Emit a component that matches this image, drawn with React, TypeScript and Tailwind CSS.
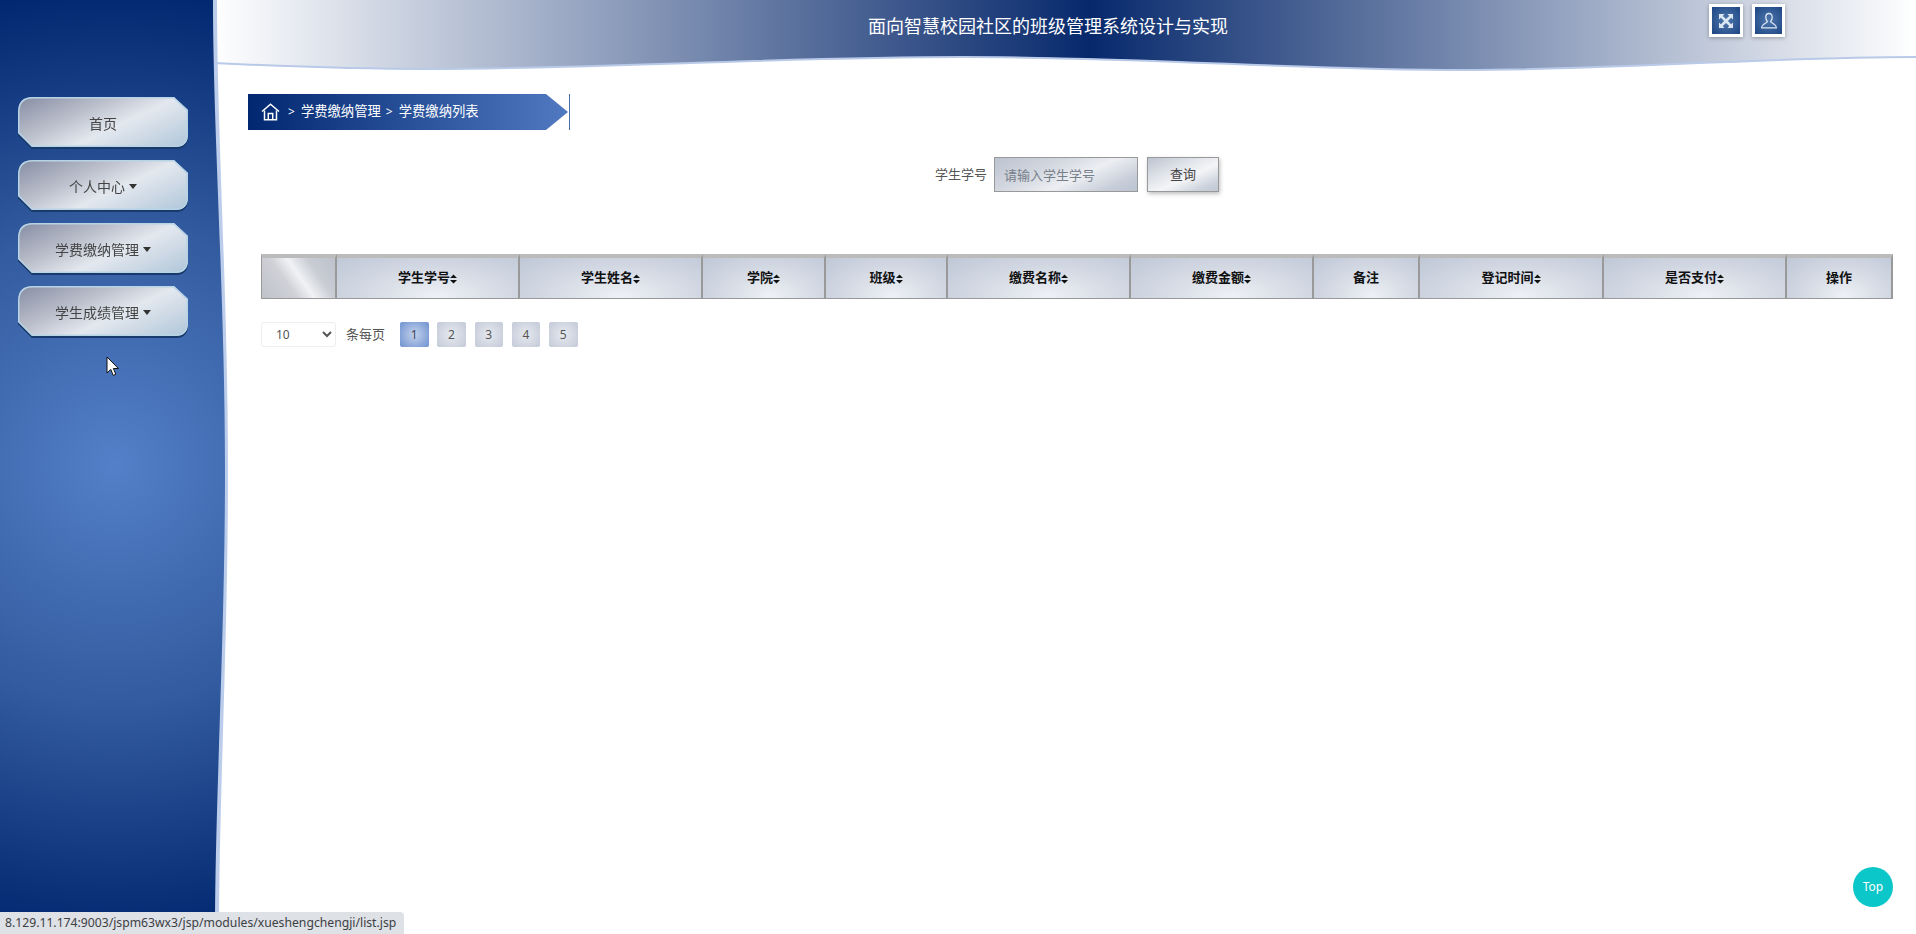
const menus = [
  { title: "首页", caret: false },
  { title: "个人中心", caret: true },
  { title: "学费缴纳管理", caret: true },
  { title: "学生成绩管理", caret: true },
];

const columns = [
  { title: "", width: 76, sort: false },
  { title: "学生学号", width: 183, sort: true },
  { title: "学生姓名", width: 183, sort: true },
  { title: "学院", width: 123, sort: true },
  { title: "班级", width: 122, sort: true },
  { title: "缴费名称", width: 183, sort: true },
  { title: "缴费金额", width: 183, sort: true },
  { title: "备注", width: 106, sort: false },
  { title: "登记时间", width: 184, sort: true },
  { title: "是否支付", width: 183, sort: true },
  { title: "操作", width: 106, sort: false },
];

const pages = [1, 2, 3, 4, 5];

const SortIcon = () => (
  <svg width="7" height="10" viewBox="0 0 7 10" className="inline-block">
    <path d="M3.5 0.5L7 4H0Z M0 6H7L3.5 9.5Z" fill="#111" />
  </svg>
);

const Caret = () => (
  <span className="inline-block w-0 h-0 ml-[4px] align-[3px] border-t-[5px] border-x-[4.5px] border-x-transparent border-t-[#333]" />
);

const SideBackground = () => (
  <svg width="228" height="934" className="absolute left-0 top-0">
    <defs>
      <radialGradient id="sideFill" gradientUnits="userSpaceOnUse" cx="115" cy="465" r="480">
        <stop offset="0" stopColor="#5380c8" />
        <stop offset="0.5" stopColor="#335b9f" />
        <stop offset="1" stopColor="#00276f" />
      </radialGradient>
    </defs>
    <path d="M0 0H217C217 130 228 300 228 470C228 640 219 800 219 934H0Z" fill="#bccdeb" />
    <path d="M0 0H213C213 130 225 300 225 470C225 640 215 800 215 934H0Z" fill="url(#sideFill)" />
  </svg>
);

const HeaderWave = () => (
  <svg width="1703" height="76" className="absolute left-[-15px] top-0">
    <defs>
      <linearGradient id="headFill" x1="0" y1="0" x2="1" y2="0">
        <stop offset="0" stopColor="#ffffff" />
        <stop offset="0.515" stopColor="#07296c" />
        <stop offset="1" stopColor="#ffffff" />
      </linearGradient>
    </defs>
    <path
      d="M0 63C85 67 145 69 215 69C385 69 565 57 750 57C935 57 1085 70 1251 70C1405 70 1545 57 1703 57V0H0Z"
      fill="url(#headFill)"
    />
    <path
      d="M0 63C85 67 145 69 215 69C385 69 565 57 750 57C935 57 1085 70 1251 70C1405 70 1545 57 1703 57"
      fill="none"
      stroke="#b9c9e8"
      strokeWidth="2"
    />
  </svg>
);

const SideButton = ({ title, caret }: { title: string; caret: boolean }) => (
  <div className="[filter:drop-shadow(0_2px_0_#1a3a6c)]">
    <button className="relative block w-[170px] h-[50px] pt-[2px] text-[14px] text-[#444] bg-[linear-gradient(155deg,#868da3_0%,#bcc0cc_35%,#e3e8ef_58%,#c9d6e3_80%,#aec6da_100%)] [clip-path:path('M15_0H156L170_13V37Q170_50_157_50H14L0_36V15Q0_0_15_0Z')]">
      <svg width="170" height="50" className="absolute left-0 top-0">
        <path
          d="M15 0H156L170 13V37Q170 50 157 50H14L0 36V15Q0 0 15 0Z"
          fill="none"
          stroke="#b7d3e6"
          strokeWidth="3"
        />
      </svg>
      <span className="relative">
        {title}
        {caret && <Caret />}
      </span>
    </button>
  </div>
);

const App = () => {
  return (
    <div className="relative flex h-[934px] w-[1916px] overflow-hidden bg-white font-['Noto_Sans','Noto_Sans_CJK_SC',sans-serif] text-[13px] text-[#333]">
      <aside className="relative z-10 w-[228px] shrink-0">
        <SideBackground />
        <div className="relative flex flex-col gap-[13px] pl-[18px] pt-[97px]">
          {menus.map((menu) => (
            <SideButton key={menu.title} title={menu.title} caret={menu.caret} />
          ))}
        </div>
      </aside>

      <main className="flex-1 min-w-0">
        <header className="relative flex h-[94px] items-start">
          <HeaderWave />
          <h1 className="relative ml-[640px] w-[360px] pt-[12px] text-center text-[18px] leading-[28px] font-normal whitespace-nowrap text-white">
            面向智慧校园社区的班级管理系统设计与实现
          </h1>
          <div className="relative ml-[481px] mt-[4px] flex gap-[9px]">
            <button className="flex h-[33px] w-[34px] items-center justify-center border-[3px] border-white bg-[radial-gradient(circle,#4f78ad,#1d4583)] shadow-[0_1px_4px_rgba(0,0,0,0.3)]">
              <svg width="16" height="16" viewBox="0 0 16 16" fill="#dbe6f2">
                <path d="M1 1H6.5L4.8 2.9L8 6.1L11.2 2.9L9.5 1H15V6.5L13.1 4.8L9.9 8L13.1 11.2L15 9.5V15H9.5L11.2 13.1L8 9.9L4.8 13.1L6.5 15H1V9.5L2.9 11.2L6.1 8L2.9 4.8L1 6.5Z" />
              </svg>
            </button>
            <button className="flex h-[33px] w-[33px] items-center justify-center border-[3px] border-white bg-[radial-gradient(circle,#4f78ad,#1d4583)] shadow-[0_1px_4px_rgba(0,0,0,0.3)]">
              <svg width="18" height="18" viewBox="0 0 18 18" fill="none" stroke="#dbe6f2" strokeWidth="1.3">
                <path d="M9 1.5C6.8 1.5 5.8 3.2 5.8 5.2C5.8 7.2 6.8 8.8 7.4 9.6C7.4 11 2 11.6 1.7 15.8H16.3C16 11.6 10.6 11 10.6 9.6C11.2 8.8 12.2 7.2 12.2 5.2C12.2 3.2 11.2 1.5 9 1.5Z" />
              </svg>
            </button>
          </div>
        </header>

        <div className="pl-[20px]">
          <nav className="flex h-[36px] items-center">
            <div className="flex h-full w-[320px] items-center bg-[linear-gradient(90deg,#00276f,#5079c2)] pl-[13px] text-[13.33px] text-white [clip-path:polygon(0_0,298px_0,320px_50%,298px_100%,0_100%)]">
              <svg width="19" height="18" viewBox="0 0 19 18" fill="none" stroke="#fff" strokeWidth="1.5">
                <path d="M1 8.5L9.5 1.2L18 8.5" />
                <path d="M3.5 7.5V16.8H15.5V7.5" />
                <path d="M7.3 16.8V10.5H11.7V16.8" />
              </svg>
              <span className="ml-[8px] text-[12px]">&gt;</span>
              <span className="ml-[6px]">学费缴纳管理</span>
              <span className="ml-[5px] text-[12px]">&gt;</span>
              <span className="ml-[6px]">学费缴纳列表</span>
            </div>
            <div className="ml-px h-full w-px bg-[#4a6fa8]" />
          </nav>

          <form className="mt-[27px] flex h-[35px] items-center pl-[687px]">
            <label className="w-[59px] text-[#555]">学生学号</label>
            <input
              placeholder="请输入学生学号"
              className="h-[35px] w-[144px] border border-[#999] bg-[linear-gradient(155deg,#bcc3d0_0%,#d4d8e0_35%,#eceef2_58%,#c6ccd8_85%,#bcc4d2_100%)] pl-[9px] text-[13px] outline-none placeholder:text-[#777f8a]"
            />
            <button
              type="button"
              className="ml-[9px] h-[35px] w-[72px] border border-[#999] bg-[linear-gradient(155deg,#bcc3d0_0%,#e0e3e9_35%,#f4f5f7_58%,#ccd2dc_85%,#c0c7d4_100%)] text-[13px] text-[#444] shadow-[1px_2px_4px_rgba(0,0,0,0.25)]"
            >
              查询
            </button>
          </form>

          <table className="ml-[13px] mt-[62px] w-[1632px] table-fixed border-separate border-spacing-0">
            <colgroup>
              {columns.map((col, i) => (
                <col key={i} style={{ width: col.width }} />
              ))}
            </colgroup>
            <thead>
              <tr className="h-[45px]">
                {columns.map((col, i) => (
                  <th
                    key={i}
                    className={
                      i === 0
                        ? "border-t-[4px] border-t-[#bbbbbb] border-b border-b-[#999] border-l border-l-[#999] border-r-2 border-r-[#999] bg-[linear-gradient(55deg,#c0c2c9_0%,#cfd1d7_35%,#f0f2f4_52%,#c9ccd3_72%,#bcc1cb_100%)]"
                        : "border-t-[4px] border-t-[#bbbbbb] border-b border-b-[#999] border-r-2 border-r-[#999] bg-[radial-gradient(ellipse_at_55%_95%,#eef1f5_0%,#d9dee7_40%,#bfc7d6_100%)] text-[13px] font-bold text-[#111]"
                    }
                  >
                    {col.title}
                    {col.sort && <SortIcon />}
                  </th>
                ))}
              </tr>
            </thead>
          </table>

          <div className="ml-[13px] mt-[23px] flex h-[25px] items-center">
            <select className="h-[25px] w-[75px] rounded-[3px] border border-[#eeeeee] bg-white pl-[10px] text-[12px] text-[#555] outline-none">
              <option>10</option>
              <option>20</option>
              <option>50</option>
            </select>
            <span className="ml-[10px] text-[#555]">条每页</span>
            <div className="ml-[15px] flex gap-[8.75px]">
              {pages.map((page) => (
                <a
                  key={page}
                  className={
                    page === 1
                      ? "flex h-[25px] w-[28.5px] items-center justify-center rounded-[2px] bg-[radial-gradient(circle,#c3d2ec,#6f92d0)] text-[12px] text-[#445]"
                      : "flex h-[25px] w-[28.5px] items-center justify-center rounded-[2px] bg-[radial-gradient(circle,#e6e9ef,#c3c9d8)] text-[12px] text-[#555]"
                  }
                >
                  {page}
                </a>
              ))}
            </div>
          </div>
        </div>
      </main>

      {/* mouse pointer */}
      <svg width="14" height="21" viewBox="0 0 14 21" className="absolute left-[106px] top-[356px] z-20">
        <path d="M1 1V17L4.8 13.4L7.2 19.4L9.8 18.3L7.4 12.5H12.4Z" fill="#fff" stroke="#111" strokeWidth="1" />
      </svg>

      <button className="absolute left-[1853px] top-[867px] flex h-[40px] w-[40px] items-center justify-center rounded-full bg-[#0cc7c9] text-[12px] text-white">
        Top
      </button>

      <div className="absolute bottom-0 left-0 z-20 flex h-[22px] w-[404px] items-center rounded-tr-[4px] bg-[#dee1e6] pl-[5px] text-[12.2px] whitespace-nowrap text-[#3c4043]">
        8.129.11.174:9003/jspm63wx3/jsp/modules/xueshengchengji/list.jsp
      </div>
    </div>
  );
};

export default App;
